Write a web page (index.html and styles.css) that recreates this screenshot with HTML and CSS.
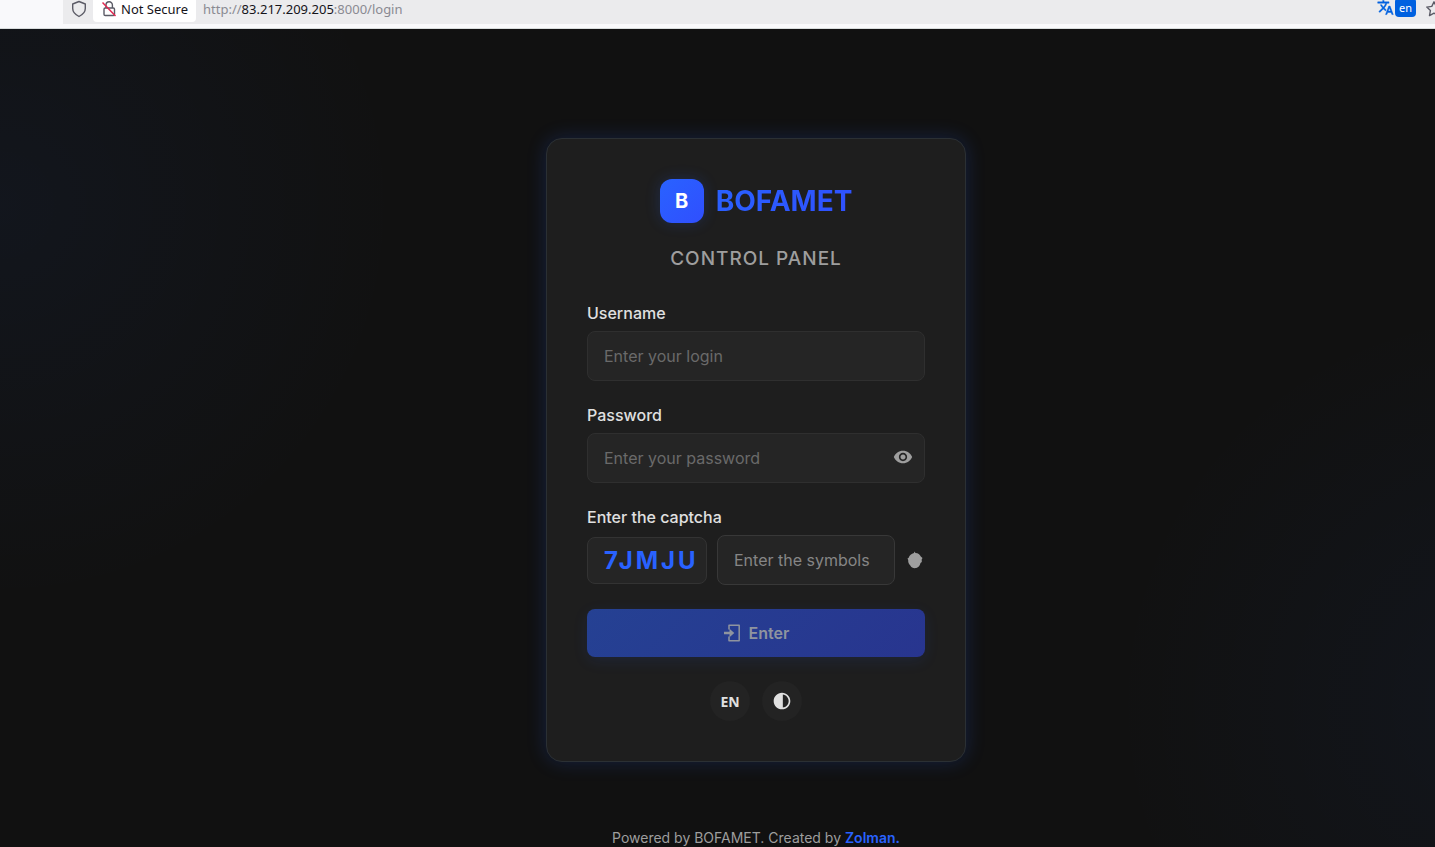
FILE: index.html
```html
<!DOCTYPE html>
<html lang="en">
<head>
  <meta charset="UTF-8">
  <meta name="viewport" content="width=device-width, initial-scale=1.0">
  <title>BOFAMET - Control Panel</title>
  <link rel="stylesheet" href="styles.css">
</head>
<body>

  <!-- Browser toolbar -->
  <header class="toolbar">
    <div class="urlbar">
      <svg class="shield" width="16" height="18" viewBox="0 0 16 18" fill="none" stroke="#5b5b66" stroke-width="1.4" stroke-linejoin="round"><path d="M8 1.5 14.3 4v4.5c0 3.600-2.500 6-6.300 8-3.800-2-6.300-4.400-6.300-8V4z"/></svg>
      <button class="security" type="button">
        <svg width="16" height="18" viewBox="0 0 16 18" fill="none" stroke="#5b5b66" stroke-width="1.4"><rect x="3" y="8" width="10.5" height="7.5" rx="1.2"/><path d="M5 8V5a3.2 3.2 0 0 1 6.4 0v3"/><path d="M1.500 2.500 14.500 16" stroke="#e22850" stroke-width="1.5"/></svg>
        Not Secure
      </button>
      <span class="url">http://<b>83.217.209.205</b>:8000/login</span>
      <button class="translate" type="button" aria-label="Translate">
        <svg width="17" height="17" viewBox="0 0 24 24" fill="#0061e0" stroke="#0061e0" stroke-width="0.6"><path d="M12.870 15.070l-2.540-2.510.030-.030A17.520 17.520 0 0 0 14.070 6H17V4h-7V2H8v2H1v2h11.170C11.500 7.920 10.440 9.750 9 11.350 8.070 10.320 7.300 9.190 6.690 8h-2c.730 1.630 1.730 3.170 2.980 4.560l-5.090 5.020L4 19l5-5 3.110 3.110.760-2.040zM18.500 10h-2L12 22h2l1.120-3h4.750L21 22h2l-4.500-12zm-2.620 7l1.620-4.330L19.120 17h-3.240z"/></svg>
        <span class="lang">en</span>
      </button>
      <svg class="star" width="18" height="18" viewBox="0 0 18 18" fill="none" stroke="#5b5b66" stroke-width="1.4" stroke-linejoin="round"><path d="M9 1.800l2.200 4.600 5 .7-3.600 3.500.9 5L9 13.200l-4.500 2.400.9-5L1.800 7.100l5-.7z"/></svg>
    </div>
  </header>

  <main class="page">
    <section class="card">
      <div class="logo">
        <span class="logo-icon">B</span>
        <span class="logo-text">BOFAMET</span>
      </div>
      <h1 class="subtitle">CONTROL PANEL</h1>

      <form class="login-form">
        <div class="field">
          <label for="username">Username</label>
          <input class="input" type="text" id="username" placeholder="Enter your login">
        </div>

        <div class="field">
          <label for="password">Password</label>
          <div class="password-wrap">
            <input class="input" type="password" id="password" placeholder="Enter your password">
            <button class="toggle-password" type="button" aria-label="Show password">
              <svg width="20" height="20" viewBox="0 0 24 24" fill="currentColor"><path d="M12 4.500C7 4.500 2.730 7.610 1 12c1.730 4.390 6 7.500 11 7.500s9.270-3.110 11-7.500c-1.730-4.390-6-7.500-11-7.500zM12 17c-2.760 0-5-2.240-5-5s2.240-5 5-5 5 2.240 5 5-2.240 5-5 5zm0-8c-1.660 0-3 1.340-3 3s1.340 3 3 3 3-1.340 3-3-1.340-3-3-3z"/></svg>
            </button>
          </div>
        </div>

        <div class="field">
          <label for="captcha">Enter the captcha</label>
          <div class="captcha-row">
            <div class="captcha-code">7JMJU</div>
            <input class="input captcha-input" type="text" id="captcha" placeholder="Enter the symbols">
            <button class="refresh" type="button" aria-label="Refresh captcha">
              <svg width="16" height="18" viewBox="0 0 16 18" fill="currentColor"><path d="M7.500.5 8.500 2c2.500.2 4.500 1.500 5.300 3.500L15.500 7l-.8 1.500.1 2.500-1.300 1c-.5 2.700-2 4.400-4.200 5-2.500.5-5-.3-6-2.500C1.700 13 1 11 1.200 9L.5 7.500l1.200-.8C2.500 4.500 4.300 2.600 7 2z"/></svg>
            </button>
          </div>
        </div>

        <button class="btn-enter" type="submit">
          <svg width="18" height="18" viewBox="0 0 18 18" fill="none" stroke="currentColor"><path d="M6 5.500V1.300h10.200v15.400H6v-4.200" stroke-width="1.5" stroke-linejoin="round"/><path d="M1 7.800h5.500V4.800L11.300 9l-4.800 4.200v-3H1z" fill="currentColor" stroke="none"/></svg>
          Enter
        </button>
      </form>

      <div class="options">
        <button class="round" type="button">EN</button>
        <button class="round" type="button" aria-label="Toggle theme">
          <svg width="20" height="20" viewBox="0 0 24 24" fill="currentColor"><path d="M12 22c5.520 0 10-4.480 10-10S17.520 2 12 2 2 6.480 2 12s4.480 10 10 10zm1-17.930c3.940.490 7 3.850 7 7.930s-3.050 7.440-7 7.930V4.070z"/></svg>
        </button>
      </div>
    </section>

    <footer class="footer">Powered by BOFAMET. Created by <a href="#">Zolman.</a></footer>
  </main>

</body>
</html>
```
FILE: styles.css
```css
* {
  box-sizing: border-box;
}

body {
  margin: 0;
  height: 100vh;
  display: flex;
  flex-direction: column;
  overflow: hidden;
  background: #111111;
  font-family: Inter, "Liberation Sans", sans-serif;
  color: #e0e0e0;
}

button {
  font-family: inherit;
  border: none;
  padding: 0;
  background: none;
  cursor: pointer;
}

svg {
  display: block;
  flex-shrink: 0;
}

/* Toolbar */
.toolbar {
  flex-shrink: 0;
  height: 29px;
  padding-left: 63px;
  background: #f9f9fb;
  border-bottom: 1px solid #d8dcdc;
  overflow: hidden;
  font-family: "Noto Sans", "Open Sans", sans-serif;
  font-size: 13px;
}

.urlbar {
  display: flex;
  align-items: center;
  height: 24px;
  padding: 0 0 6px 8px;
  background: #ebebed;
}

.security {
  display: flex;
  align-items: center;
  gap: 4px;
  height: 26px;
  margin: 0 7px 0 6px;
  padding: 0 8px;
  background: #ffffff;
  border-radius: 4px;
  font-size: 13px;
  color: #15141a;
}

.url {
  flex: 1;
  color: #8a8a92;
}

.url b {
  font-weight: 400;
  color: #15141a;
}

.translate {
  display: flex;
  align-items: center;
  gap: 1px;
  padding-bottom: 3px;
}

.lang {
  padding: 0 4px;
  line-height: 19px;
  background: #0061e0;
  border-radius: 4px;
  font-size: 11px;
  color: #ffffff;
}

.star {
  margin: 0 -8px 0 9px;
}

/* Page */
.page {
  flex: 1;
  display: flex;
  flex-direction: column;
  align-items: center;
  padding: 109px 0 0 77px;
  background:
    radial-gradient(circle at 0 176px, rgba(41, 110, 255, 0.05), transparent 400px),
    radial-gradient(circle at calc(100% + 77px) 675px, rgba(41, 110, 255, 0.05), transparent 400px),
    #111111;
}

.card {
  flex-shrink: 0;
  width: 420px;
  padding: 40px;
  background: #1e1e1e;
  border: 1px solid #2b3034;
  border-radius: 16px;
  box-shadow: 0 0 20px rgba(41, 98, 255, 0.2);
}

.logo {
  display: flex;
  align-items: center;
  justify-content: center;
  gap: 12px;
}

.logo-icon {
  width: 44px;
  height: 44px;
  border-radius: 12px;
  background: linear-gradient(135deg, #2962ff, #304ffe);
  box-shadow: 0 0 15px rgba(41, 98, 255, 0.2);
  color: #ffffff;
  font-size: 20px;
  font-weight: 700;
  line-height: 44px;
  text-align: center;
}

.logo-text {
  font-size: 28px;
  font-weight: 700;
  line-height: 44px;
  background: linear-gradient(135deg, #2962ff, #304ffe);
  background-clip: text;
  -webkit-background-clip: text;
  color: transparent;
}

.subtitle {
  margin: 24px 0 32px;
  font-size: 19px;
  font-weight: 500;
  line-height: 24px;
  letter-spacing: 1px;
  text-align: center;
  color: #9e9e9e;
}

/* Form */
.field {
  margin-bottom: 24px;
}

.field label {
  display: block;
  margin-bottom: 8px;
  font-size: 16px;
  font-weight: 500;
  line-height: 20px;
}

.input {
  display: block;
  width: 100%;
  height: 50px;
  padding: 0 16px;
  background: #252525;
  border: 1px solid #2f2f2f;
  border-radius: 8px;
  font-family: inherit;
  font-size: 16px;
  color: #e0e0e0;
  outline: none;
}

.input::placeholder {
  color: #6a6a6a;
}

.password-wrap {
  position: relative;
}

.toggle-password {
  position: absolute;
  top: 14px;
  right: 12px;
  color: #9e9e9e;
}

.captcha-row {
  display: flex;
  align-items: center;
  gap: 10px;
}

.captcha-code {
  width: 120px;
  padding-left: 16px;
  background: #252525;
  border: 1px solid #333333;
  border-radius: 8px;
  font-size: 24px;
  font-weight: 700;
  line-height: 45px;
  letter-spacing: 3px;
  color: #2962ff;
}

.captcha-input {
  flex: 1;
  min-width: 0;
  border-color: #383838;
}

.captcha-input::placeholder {
  color: #868686;
}

.refresh {
  padding: 0 2px;
  color: #9e9e9e;
}

.btn-enter {
  display: flex;
  align-items: center;
  justify-content: center;
  gap: 8px;
  width: 100%;
  height: 48px;
  border-radius: 8px;
  background: linear-gradient(135deg, #254193, #28358f);
  box-shadow: 0 4px 15px rgba(41, 98, 255, 0.1);
  font-size: 16px;
  font-weight: 600;
  color: #8f949f;
}

.options {
  display: flex;
  justify-content: center;
  gap: 12px;
  margin-top: 24px;
}

.round {
  display: flex;
  align-items: center;
  justify-content: center;
  width: 40px;
  height: 40px;
  border-radius: 50%;
  background: #232323;
  font-family: "Noto Sans", "Open Sans", sans-serif;
  font-size: 14px;
  font-weight: 700;
  color: #e0e0e0;
}

.footer {
  margin-top: 66px;
  font-size: 14px;
  line-height: 20px;
  color: #9e9e9e;
}

.footer a {
  font-weight: 600;
  color: #2962ff;
  text-decoration: none;
}
```
